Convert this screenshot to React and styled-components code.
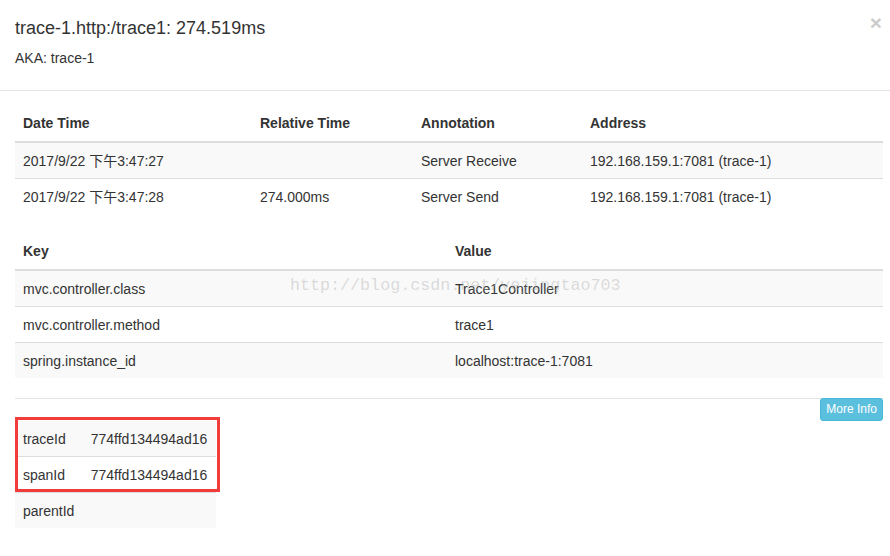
import React from 'react';
import styled, { createGlobalStyle } from 'styled-components';

const GlobalStyle = createGlobalStyle`
  html, body {
    margin: 0;
    padding: 0;
    background: #fff;
    overflow: hidden;
  }
  body {
    font-family: "Liberation Sans", Arial, "Noto Sans CJK SC", sans-serif;
    font-size: 14px;
    line-height: 20px;
    color: #333;
  }
`;

const spans = [
  { date: '2017/9/22 下午3:47:27', relative: '', annotation: 'Server Receive', address: '192.168.159.1:7081 (trace-1)' },
  { date: '2017/9/22 下午3:47:28', relative: '274.000ms', annotation: 'Server Send', address: '192.168.159.1:7081 (trace-1)' },
];

const tags = [
  { key: 'mvc.controller.class', value: 'Trace1Controller' },
  { key: 'mvc.controller.method', value: 'trace1' },
  { key: 'spring.instance_id', value: 'localhost:trace-1:7081' },
];

const ids = [
  { key: 'traceId', value: '774ffd134494ad16' },
  { key: 'spanId', value: '774ffd134494ad16' },
  { key: 'parentId', value: '' },
];

const App = () => {
  return (
    <Modal>
      <GlobalStyle />
      <Header>
        <div>
          <Title>trace-1.http:/trace1: 274.519ms</Title>
          <Aka>AKA: trace-1</Aka>
        </div>
        <Close>×</Close>
      </Header>

      <Body>
        <Table $gap={19}>
          <colgroup>
            <col style={{ width: 237 }} />
            <col style={{ width: 161 }} />
            <col style={{ width: 169 }} />
            <col />
          </colgroup>
          <thead>
            <tr>
              <Th>Date Time</Th>
              <Th>Relative Time</Th>
              <Th>Annotation</Th>
              <Th>Address</Th>
            </tr>
          </thead>
          <tbody>
            {spans.map((s, i) => (
              <Tr key={i}>
                <Td>{s.date}</Td>
                <Td>{s.relative}</Td>
                <Td>{s.annotation}</Td>
                <Td>{s.address}</Td>
              </Tr>
            ))}
          </tbody>
        </Table>

        <TagsWrap>
          <Table $gap={20}>
            <colgroup>
              <col style={{ width: 432 }} />
              <col />
            </colgroup>
            <thead>
              <tr>
                <Th>Key</Th>
                <Th>Value</Th>
              </tr>
            </thead>
            <tbody>
              {tags.map((t) => (
                <Tr key={t.key}>
                  <Td>{t.key}</Td>
                  <Td>{t.value}</Td>
                </Tr>
              ))}
            </tbody>
          </Table>
          <Watermark>http://blog.csdn.net/yejingtao703</Watermark>
        </TagsWrap>

        <Footer>
          <ButtonRow>
            <InfoButton>More Info</InfoButton>
          </ButtonRow>
          <IdWrap>
            <IdTable>
              <tbody>
                {ids.map((r) => (
                  <Tr key={r.key}>
                    <Td>{r.key}</Td>
                    <Td>{r.value}</Td>
                  </Tr>
                ))}
              </tbody>
            </IdTable>
            <Highlight />
          </IdWrap>
        </Footer>
      </Body>
    </Modal>
  );
};

const Modal = styled.div`
  width: 898px;
  background: #fff;
`;

const Header = styled.div`
  display: flex;
  justify-content: space-between;
  align-items: flex-start;
  height: 75px;
  padding: 15px 16px 0 15px;
  border-bottom: 1px solid #e5e5e5;
`;

const Title = styled.h4`
  margin: 0;
  font-size: 18px;
  font-weight: 500;
  line-height: 26px;
  color: #333;
`;

const Aka = styled.p`
  margin: 7px 0 0;
  font-size: 14px;
  line-height: 20px;
`;

const Close = styled.span`
  font-size: 21px;
  font-weight: bold;
  line-height: 1;
  color: #000;
  opacity: 0.2;
  margin-top: -3px;
  cursor: pointer;
`;

const Body = styled.div`
  padding: 14px 15px 15px;
`;

const Table = styled.table`
  width: 868px;
  border-collapse: collapse;
  border-spacing: 0;
  table-layout: fixed;
  margin-bottom: ${(p) => p.$gap}px;
`;

const Th = styled.th`
  text-align: left;
  font-weight: bold;
  padding: 8px;
  line-height: 20px;
  border-bottom: 2px solid #ddd;
  vertical-align: bottom;
  white-space: nowrap;
`;

const Tr = styled.tr`
  &:nth-of-type(odd) {
    background: #f9f9f9;
  }
`;

const Td = styled.td`
  padding: 8px 8px 7px;
  height: 20px;
  line-height: 20px;
  border-top: 1px solid #ddd;
  white-space: nowrap;
  vertical-align: top;
  tbody tr:first-child > & {
    border-top: 0;
  }
`;

const TagsWrap = styled.div`
  position: relative;
`;

const Watermark = styled.span`
  position: absolute;
  left: 275px;
  top: 43px;
  font-family: "Liberation Mono", "DejaVu Sans Mono", monospace;
  font-size: 16.7px;
  line-height: 20px;
  color: rgba(180, 180, 180, 0.45);
  pointer-events: none;
  white-space: nowrap;
`;

const Footer = styled.div`
  border-top: 1px solid #e5e5e5;
  width: 868px;
`;

const ButtonRow = styled.div`
  display: flex;
  justify-content: flex-end;
  margin-top: -1px;
`;

const InfoButton = styled.button`
  font-family: "Liberation Sans", Arial, sans-serif;
  font-size: 12px;
  line-height: 18px;
  padding: 1px 5px 2px;
  color: #fff;
  background: #5bc0de;
  border: 1px solid #46b8da;
  border-radius: 3px;
  cursor: pointer;
`;

const IdWrap = styled.div`
  position: relative;
  width: 201px;
`;

const IdTable = styled.table`
  width: 201px;
  border-collapse: collapse;
  border-spacing: 0;
`;

const Highlight = styled.div`
  position: absolute;
  left: 0;
  top: -4px;
  width: 199px;
  height: 69px;
  border: 3px solid #f23b3b;
  pointer-events: none;
`;

export default App;
